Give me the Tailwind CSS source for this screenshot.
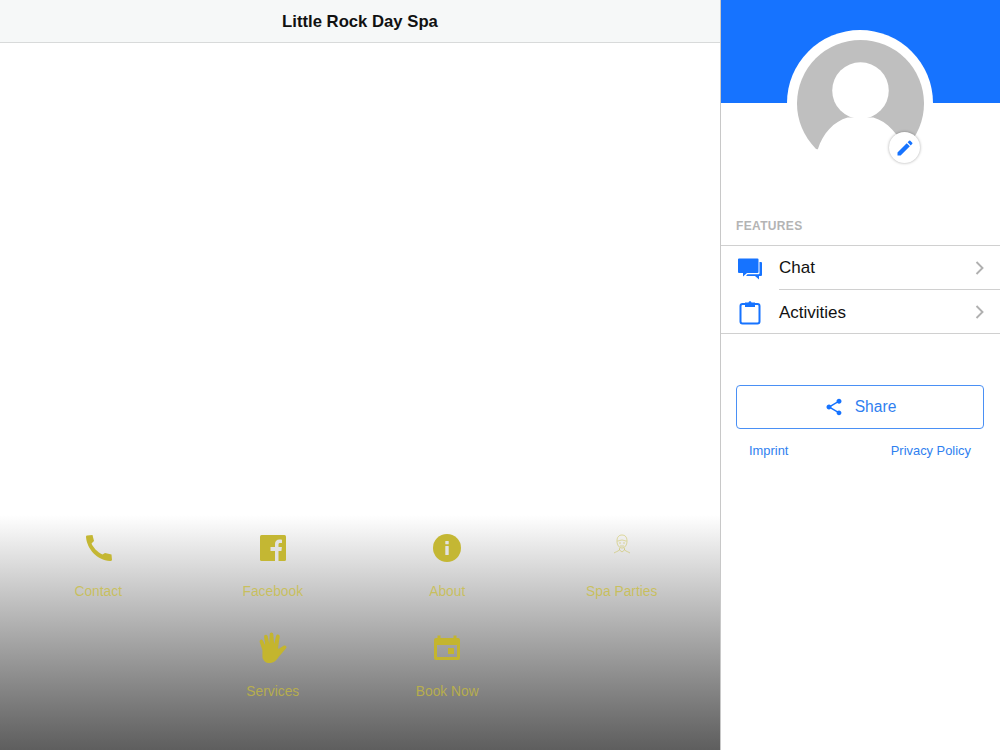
<!doctype html>
<html lang="en">
<head>
  <meta charset="utf-8">
  <title>Little Rock Day Spa</title>
  <script src="https://cdn.jsdelivr.net/npm/@tailwindcss/browser@4"></script>
</head>
<body class="w-[1000px] h-[750px] overflow-hidden bg-white font-['Liberation_Sans',Arial,sans-serif] flex">
  <!-- app preview -->
  <div class="w-[720px] h-full flex flex-col">
    <header class="h-[43px] shrink-0 bg-[#f6f8f8] border-b border-[#d8dada] flex items-center justify-center">
      <h1 class="text-[16.7px] font-bold text-[#111] mt-[1px]">Little Rock Day Spa</h1>
    </header>
    <div class="flex-1"></div>
    <nav class="h-[235px] shrink-0 bg-gradient-to-b from-white to-[#5e5e5e] px-[11px] grid grid-cols-4 auto-rows-[100px] text-[13.8px] text-[#c9bd3a]/75 text-center">
      <a class="flex flex-col items-center pt-[13px]">
        <svg class="w-10 h-10 text-[#c4b733]" viewBox="-8 -7 40 40" fill="currentColor"><path d="M1 .5 6.500 0 8 6 5.500 8.500C7 12 11 17 16.500 19.500L19 18l6.500 1.500.5 5.500c0 .5-1 1-2 1C11 25 1 14 0 2 0 1 .5.500 1 .5z"/></svg>
        <span class="mt-[14px]">Contact</span>
      </a>
      <a class="flex flex-col items-center pt-[13px]">
        <svg class="w-10 h-10 text-[#c4b733]" viewBox="0 0 40 40"><rect x="7" y="7" width="26" height="26" rx="1.500" fill="currentColor"/><path fill="#e2e2e2" d="M22 33V23h-4.500v-4H22v-3c0-3 1.800-4.500 4.400-4.500.900 0 1.900.100 2.600.200V15h-1.800c-1.400 0-1.700.700-1.700 1.700V19h3.400l-.500 4h-2.900v10z"/></svg>
        <span class="mt-[14px]">Facebook</span>
      </a>
      <a class="flex flex-col items-center pt-[13px]">
        <svg class="w-10 h-10 text-[#c4b733]" viewBox="0 0 40 40"><circle cx="20" cy="20" r="14" fill="currentColor"/><rect x="18.300" y="18" width="3.400" height="9" rx=".5" fill="#e2e2e2"/><rect x="18.300" y="13" width="3.400" height="3.200" rx=".5" fill="#e2e2e2"/></svg>
        <span class="mt-[14px]">About</span>
      </a>
      <a class="flex flex-col items-center pt-[13px]">
        <svg class="w-10 h-10 text-[#c4b733]/45" viewBox="0 0 40 40" fill="none" stroke="currentColor" stroke-width="1"><path d="M15 13c0-4 2-6 5-6s5 2 5 6-2 7-5 7-5-3-5-7z"/><path d="M15.500 13c2 0 3-1 4.500-1s2.500 1 4.500 1M17 15h2M21 15h2M18 18h4"/><path d="M17.500 20v2c-2 1.500-4 2-5.500 3M22.500 20v2c2 1.500 4 2 5.500 3M17.500 22l2.500 2 2.500-2"/></svg>
        <span class="mt-[14px]">Spa Parties</span>
      </a>
      <a class="col-start-2 flex flex-col items-center pt-[13px]">
        <svg class="w-10 h-10 text-[#c4b52e]" viewBox="1 1 36 36" fill="currentColor"><path d="M9.500 21 7 13.500c-.5-2 2-3 2.900-1.200L12 16.500 11 9c-.3-2.300 2.600-2.800 3.200-.6l1.500 7L16 6.800c0-2.400 3.200-2.400 3.300 0l.7 8.700 1.800-7.200c.6-2.200 3.500-1.500 3.200.7l-1.400 9.500c-.2 1.200.5 1.600 1.400.8l3.500-2.300c1.800-1.100 3.500.7 2.300 2.300l-6 7c-2 2.600-3.500 5.600-7.800 6.200-4.500.4-6.500-2-7.500-5z"/></svg>
        <span class="mt-[14px]">Services</span>
      </a>
      <a class="flex flex-col items-center pt-[13px]">
        <svg class="w-10 h-10 text-[#c4b52e]" viewBox="0 0 40 40" fill="currentColor"><path fill-rule="evenodd" d="M9 10h1.500V7.500h3V10h13V7.500h3V10H31a2 2 0 0 1 2 2v18a2 2 0 0 1-2 2H9a2 2 0 0 1-2-2V12a2 2 0 0 1 2-2zm1 7v12h20V17z"/><rect x="21" y="20" width="6" height="6"/></svg>
        <span class="mt-[14px]">Book Now</span>
      </a>
    </nav>
  </div>

  <!-- profile sidebar -->
  <aside class="relative w-[280px] h-full border-l border-[#c8c8c8] bg-white flex flex-col">
    <div class="h-[103px] shrink-0 bg-[#1673ff]"></div>
    <!-- avatar -->
    <div class="absolute left-[66px] top-[30px] w-[146px] h-[146px] rounded-full bg-white flex items-center justify-center">
      <svg class="w-[127px] h-[127px]" viewBox="0 0 128 128">
        <circle cx="64" cy="64" r="64" fill="#bfbfbf"/>
        <circle cx="64" cy="51" r="28.500" fill="#fff"/>
        <path fill="#fff" d="M0 128V110h21c5-16 16-28 30-32h26c14 4 26 17 33 35v15z"/>
      </svg>
    </div>
    <div class="absolute left-[168px] top-[132px] w-[31px] h-[31px] rounded-full bg-white shadow-[0_0_3px_rgba(0,0,0,0.35)] flex items-center justify-center">
      <svg class="w-5 h-5 text-[#1673ff]" viewBox="0 0 24 24" fill="currentColor"><path d="M3 17.250V21h3.750L17.810 9.940l-3.750-3.750L3 17.250zM20.710 7.040a1 1 0 0 0 0-1.410l-2.340-2.340a1 1 0 0 0-1.410 0l-1.830 1.830 3.750 3.750 1.830-1.830z"/></svg>
    </div>

    <div class="mt-[116px] pl-[15px] text-[12px] leading-[14px] font-bold tracking-[0.35px] text-[#b4b4b4]">FEATURES</div>
    <div class="mt-[12px] border-y border-[#d0d0d0]">
      <a class="h-[43px] flex items-center">
        <span class="w-[58px] pl-[16px] shrink-0">
          <svg class="w-[26px] h-[26px] text-[#1673ff]" viewBox="0 0 26 26" fill="currentColor"><path d="M2 3.500h18.500a1 1 0 0 1 1 1V17a1 1 0 0 1-1 1H10l-4 3.500V18H2a1 1 0 0 1-1-1V4.500a1 1 0 0 1 1-1z"/><path d="M22.500 7H24a1 1 0 0 1 1 1v12a1 1 0 0 1-1 1h-2v3.500L18 21h-9l1.500-1.800H21.500a1 1 0 0 0 1-1z"/></svg>
        </span>
        <span class="flex-1 text-[17px] text-[#111]">Chat</span>
        <svg class="w-[9px] h-[14px] mr-[16px] text-[#b0b0b0]" viewBox="0 0 9 14" fill="none" stroke="currentColor" stroke-width="1.900"><path d="M1.500 1 7.500 7l-6 6"/></svg>
      </a>
      <div class="ml-[58px] h-px bg-[#d0d0d0]"></div>
      <a class="h-[43px] flex items-center">
        <span class="w-[58px] pl-[16px] shrink-0">
          <svg class="w-[26px] h-[26px] text-[#1673ff]" viewBox="0 0 26 26"><rect x="3.500" y="5" width="19" height="19.500" rx="2" fill="none" stroke="currentColor" stroke-width="2"/><path fill="currentColor" d="M8 3.500h3.500c.3-1.800 2.700-1.800 3 0H18V8H8z"/></svg>
        </span>
        <span class="flex-1 text-[17px] text-[#111] mt-[2px]">Activities</span>
        <svg class="w-[9px] h-[14px] mr-[16px] text-[#b0b0b0]" viewBox="0 0 9 14" fill="none" stroke="currentColor" stroke-width="1.900"><path d="M1.500 1 7.500 7l-6 6"/></svg>
      </a>
    </div>

    <a class="mt-[51px] ml-[15px] mr-[16px] h-[44px] border border-[#4a90f5] rounded-[4px] flex items-center justify-center gap-[11px] text-[15.6px] text-[#2f7ff0]">
      <svg class="w-5 h-5 text-[#1673ff]" viewBox="0 0 24 24" fill="currentColor"><path d="M18 16.080c-.760 0-1.440.300-1.960.770L8.910 12.700c.050-.230.090-.460.090-.700s-.040-.470-.090-.700l7.050-4.110c.540.500 1.250.810 2.040.810 1.660 0 3-1.340 3-3s-1.340-3-3-3-3 1.340-3 3c0 .240.040.470.090.700L8.040 9.810C7.500 9.310 6.790 9 6 9c-1.660 0-3 1.340-3 3s1.340 3 3 3c.790 0 1.500-.310 2.040-.810l7.120 4.160c-.050.210-.080.430-.080.650 0 1.610 1.310 2.920 2.920 2.920s2.920-1.310 2.920-2.920-1.310-2.920-2.920-2.920z"/></svg>
      <span>Share</span>
    </a>
    <div class="mt-[14px] pl-[28px] pr-[29px] flex justify-between text-[12.9px] leading-[15px] text-[#2f7ff0]">
      <a>Imprint</a>
      <a>Privacy Policy</a>
    </div>
  </aside>
</body>
</html>
